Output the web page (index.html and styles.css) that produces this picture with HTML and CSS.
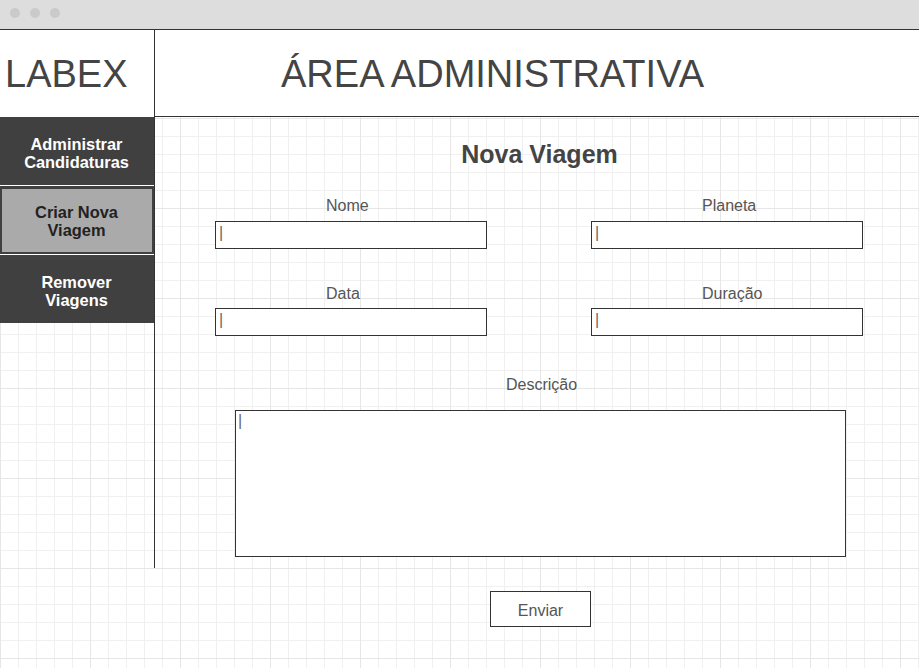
FILE: index.html
```html
<!DOCTYPE html>
<html lang="pt-BR">
<head>
<meta charset="utf-8">
<title>LABEX - Área Administrativa</title>
<link rel="stylesheet" href="styles.css">
</head>
<body>
<div class="titlebar">
  <span class="dot"></span><span class="dot"></span><span class="dot"></span>
</div>
<div class="main">
  <aside class="sidebar">
    <div class="brand">LABEX</div>
    <nav class="nav">
      <a class="nav-item">Administrar<br>Candidaturas</a>
      <a class="nav-item active">Criar Nova<br>Viagem</a>
      <a class="nav-item">Remover<br>Viagens</a>
    </nav>
  </aside>
  <section class="content">
    <header class="header">
      <h1 class="header-title">ÁREA ADMINISTRATIVA</h1>
    </header>
    <form class="form">
      <h2 class="form-title">Nova Viagem</h2>
      <div class="fields">
        <div class="field-group">
          <span class="label">Nome</span>
          <div class="input">|</div>
        </div>
        <div class="field-group">
          <span class="label">Planeta</span>
          <div class="input">|</div>
        </div>
        <div class="field-group">
          <span class="label">Data</span>
          <div class="input">|</div>
        </div>
        <div class="field-group">
          <span class="label">Duração</span>
          <div class="input">|</div>
        </div>
      </div>
      <div class="desc-group">
        <span class="label">Descrição</span>
        <div class="textarea">|</div>
      </div>
      <div class="actions">
        <button type="button" class="btn">Enviar</button>
      </div>
    </form>
  </section>
</div>
</body>
</html>
```

FILE: styles.css
```css
html, body {
  margin: 0;
  padding: 0;
}

body {
  width: 919px;
  height: 668px;
  overflow: hidden;
  font-family: "Liberation Sans", Arial, Helvetica, sans-serif;
  background-color: #ffffff;
  background-image:
    linear-gradient(#e6e6e6 1px, transparent 1px),
    linear-gradient(90deg, #e6e6e6 1px, transparent 1px),
    linear-gradient(#f0f0f0 1px, transparent 1px),
    linear-gradient(90deg, #f0f0f0 1px, transparent 1px);
  background-size: 90px 90px, 90px 90px, 18px 18px, 18px 18px;
  background-position: 0 28px, 0 0, 0 10px, 0 0;
}

.titlebar {
  height: 30px;
  box-sizing: border-box;
  background: #dddddd;
  border-bottom: 1px solid #333333;
  display: flex;
  align-items: center;
  gap: 10px;
  padding: 0 0 3px 10px;
}

.dot {
  width: 10px;
  height: 10px;
  border-radius: 50%;
  background: #cacaca;
}

.main {
  display: flex;
  align-items: flex-start;
}

.sidebar {
  width: 154px;
  height: 538px;
  border-right: 1px solid #333333;
  flex-shrink: 0;
  display: flex;
  flex-direction: column;
}

.brand {
  height: 87px;
  background: #ffffff;
  font-size: 38px;
  color: #444444;
  display: flex;
  align-items: center;
  padding: 2px 0 0 5px;
  box-sizing: border-box;
}

.nav {
  display: flex;
  flex-direction: column;
  gap: 1px;
  background: #ffffff;
}

.nav-item {
  height: 68px;
  box-sizing: border-box;
  display: flex;
  align-items: center;
  justify-content: center;
  text-align: center;
  background: #404040;
  color: #ffffff;
  font-size: 16.4px;
  font-weight: bold;
  line-height: 18px;
  padding: 3px 1px 0 0;
  text-decoration: none;
}

.nav-item.active {
  background: #aaaaaa;
  color: #222222;
  border: 2px solid #404040;
  border-top-width: 3px;
  padding: 1px 1px 0 0;
}

.content {
  flex: 1;
  min-width: 0;
}

.header {
  height: 87px;
  box-sizing: border-box;
  background: #ffffff;
  border-bottom: 1px solid #333333;
  display: flex;
  align-items: center;
  padding: 2px 0 0 126px;
}

.header-title {
  margin: 0;
  font-size: 38px;
  font-weight: normal;
  color: #444444;
  white-space: nowrap;
}

.form {
  padding: 22px 55px 0 60px;
  margin: 0;
}

.form-title {
  margin: 0;
  font-size: 25px;
  line-height: 30px;
  font-weight: bold;
  color: #444444;
  text-align: center;
}

.fields {
  margin-top: 28px;
  display: grid;
  grid-template-columns: 272px 272px;
  column-gap: 104px;
  row-gap: 35px;
}

.field-group {
  display: flex;
  flex-direction: column;
  align-items: stretch;
}

.label {
  display: block;
  font-size: 16px;
  line-height: 18px;
  color: #555555;
}

.field-group .label {
  margin-bottom: 6px;
  padding-left: 111px;
}

.fields .field-group:nth-child(n+3) .label {
  padding-top: 1px;
  margin-bottom: 5px;
}

.input {
  height: 28px;
  box-sizing: border-box;
  border: 1px solid #333333;
  background: #ffffff;
  font-size: 16px;
  line-height: 22px;
  padding: 0 3px;
  color: #666666;
}

.desc-group {
  margin-top: 40px;
  display: flex;
  flex-direction: column;
  align-items: flex-start;
}

.desc-group .label {
  margin-bottom: 16px;
  margin-left: 291px;
}

.textarea {
  width: 611px;
  height: 147px;
  box-sizing: border-box;
  border: 1px solid #333333;
  background: #ffffff;
  font-size: 16px;
  line-height: 18px;
  padding: 1px 2px;
  color: #666666;
  margin-left: 20px;
}

.actions {
  margin-top: 34px;
  display: flex;
  justify-content: center;
}

.btn {
  width: 101px;
  height: 36px;
  box-sizing: border-box;
  border: 1px solid #333333;
  background: #ffffff;
  font-family: "Liberation Sans", Arial, Helvetica, sans-serif;
  font-size: 16px;
  color: #555555;
  padding: 3px 0 0 0;
  margin-left: 2px;
}
```
